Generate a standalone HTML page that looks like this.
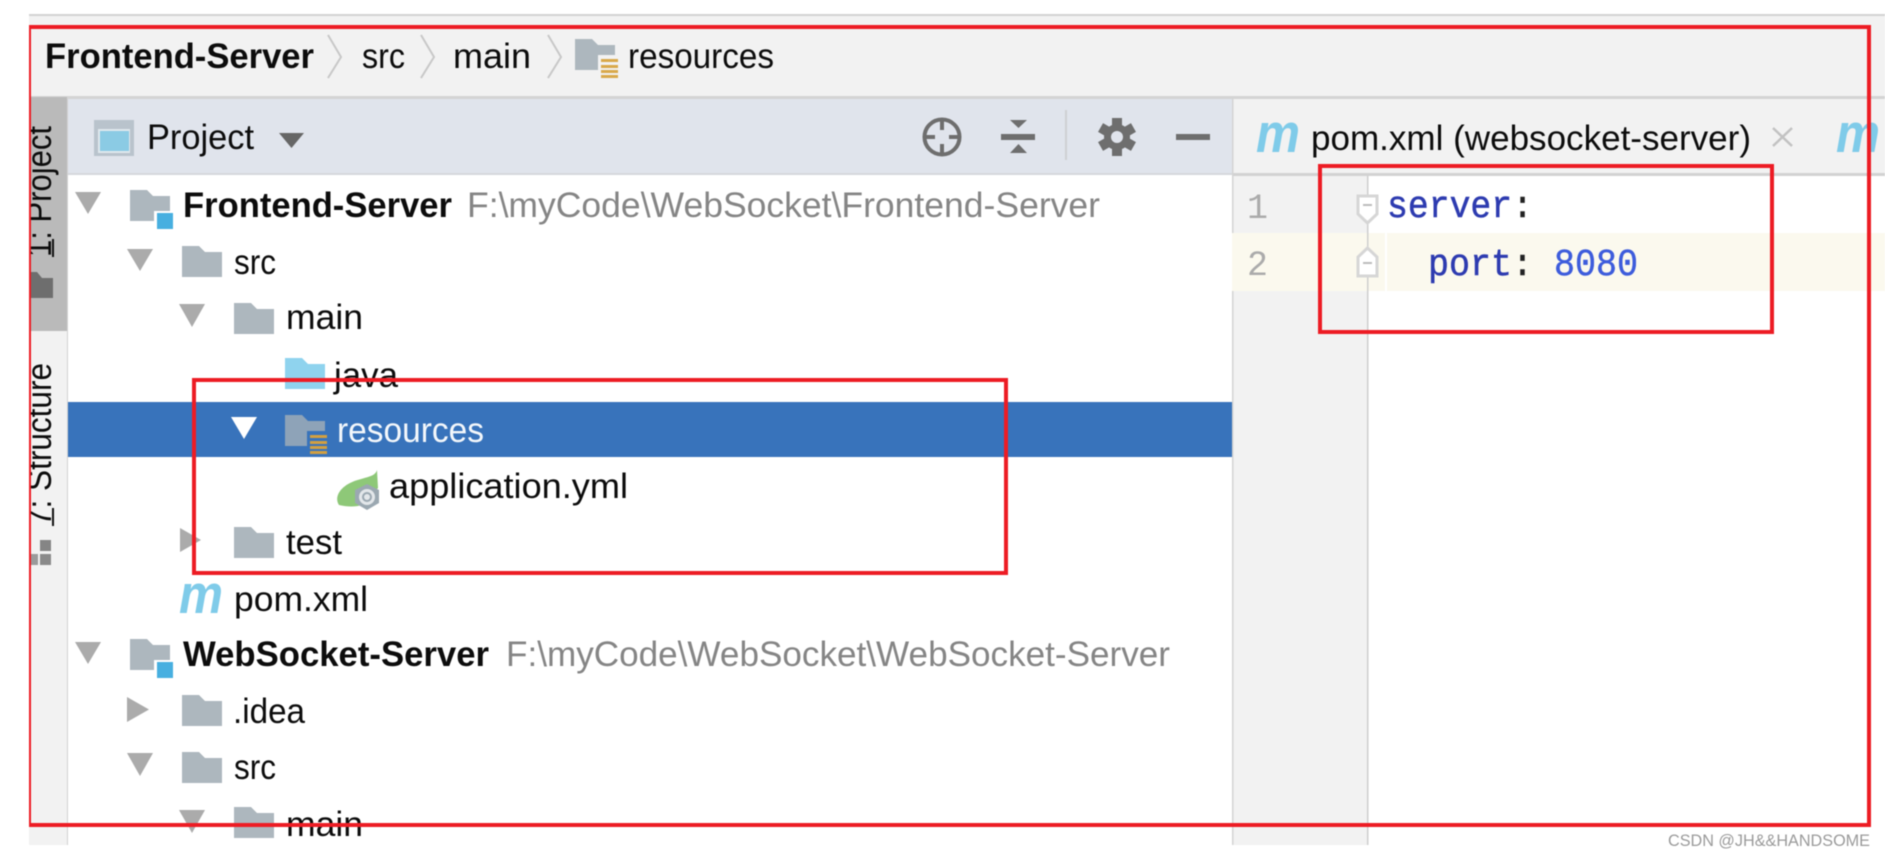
<!DOCTYPE html>
<html lang="en">
<head>
<meta charset="utf-8">
<title>Project view</title>
<style>
html,body{margin:0;padding:0;background:#fff;width:1885px;height:856px;overflow:hidden}
svg{display:block;filter:blur(.65px)}
text{font-family:"Liberation Sans",sans-serif;font-size:35px;fill:#0c0c0c}
.b{font-weight:700}
.g{fill:#858585}
.mono{font-family:"Liberation Mono",monospace;font-size:38px;stroke-width:.5px}
.ln{font-family:"Liberation Mono",monospace;font-size:35px;fill:#ababab}
.m{font-weight:700;font-style:italic;font-size:55px;fill:#7fcbe9}
</style>
</head>
<body>
<svg width="1885" height="856" viewBox="0 0 1885 856" xmlns="http://www.w3.org/2000/svg">
<defs>
<path id="f" d="M0 0H17L23 6H40V31H0Z"/>
</defs>
<rect width="1885" height="856" fill="#fff"/>
<!-- top areas -->
<rect x="29" y="14" width="1856" height="2" fill="#d2d2d2"/>
<rect x="29" y="16" width="1856" height="81" fill="#f2f2f2"/>
<rect x="29" y="96" width="1856" height="3" fill="#d4d4d4"/>
<rect x="68" y="99" width="1164" height="74" fill="#e0e4ec"/>
<rect x="1232" y="99" width="653" height="74" fill="#f2f2f2"/>
<rect x="68" y="173" width="1164" height="2" fill="#d6d8dc"/>
<rect x="1232" y="173" width="653" height="3" fill="#d2d2d2"/>
<!-- left strip -->
<rect x="29" y="97" width="38" height="748" fill="#f2f2f2"/>
<rect x="29" y="97" width="38" height="234" fill="#bababa"/>
<rect x="67" y="99" width="1" height="746" fill="#d2d2d2"/>
<!-- editor -->
<rect x="1232" y="176" width="136" height="669" fill="#f2f2f2"/>
<rect x="1232" y="99" width="1.500" height="746" fill="#d4d4d4"/>
<rect x="1232" y="233" width="653" height="58" fill="#fbf9ee"/>
<rect x="1385" y="233" width="2" height="58" fill="#fff"/>
<rect x="1367" y="176" width="1.500" height="669" fill="#cfcfcf"/>

<!-- breadcrumb -->
<text class="b" x="45" y="68" textLength="269" lengthAdjust="spacingAndGlyphs">Frontend-Server</text>
<polyline points="328,35 341,57 328,78" fill="none" stroke="#c8c8c8" stroke-width="2"/>
<text x="362" y="68" textLength="43" lengthAdjust="spacingAndGlyphs">src</text>
<polyline points="421,35 434,57 421,78" fill="none" stroke="#c8c8c8" stroke-width="2"/>
<text x="453" y="68" textLength="78" lengthAdjust="spacingAndGlyphs">main</text>
<polyline points="548,35 561,57 548,78" fill="none" stroke="#c8c8c8" stroke-width="2"/>
<use href="#f" x="575" y="39" fill="#adb7be"/>
<rect x="598" y="55" width="22" height="25" fill="#f2f2f2"/>
<path d="M601 59h17v3h-17zM601 65h17v3h-17zM601 70h17v3h-17zM601 75h17v3h-17z" fill="#d9a94a"/>
<text x="628" y="68" textLength="146" lengthAdjust="spacingAndGlyphs">resources</text>

<!-- tool strip labels -->
<g transform="translate(51,257) rotate(-90)">
<text x="0" y="0" textLength="131" lengthAdjust="spacingAndGlyphs">1: Project</text>
<rect x="0" y="1" width="18" height="2" fill="#111"/>
</g>
<path d="M30 272H37L42 278H53V298H30Z" fill="#6e6e6e"/>
<g transform="translate(51,526) rotate(-90)">
<text x="0" y="0" textLength="163" lengthAdjust="spacingAndGlyphs">7: Structure</text>
<rect x="0" y="1" width="18" height="2" fill="#111"/>
</g>
<rect x="40" y="540" width="11" height="11" fill="#858585"/>
<rect x="30" y="554" width="8" height="11" fill="#9a9a9a"/>
<rect x="40" y="554" width="11" height="11" fill="#8a8a8a"/>
<!-- crop the sideways labels at the image edge -->
<rect x="0" y="97" width="29" height="748" fill="#fff"/>

<!-- project toolbar -->
<rect x="94" y="120" width="40" height="36" fill="#b9c3cc"/>
<rect x="98" y="129" width="32" height="24" fill="#dfe7ed"/>
<rect x="100" y="131" width="29" height="20" fill="#8bcbe4"/>
<text x="147" y="149" textLength="107" lengthAdjust="spacingAndGlyphs">Project</text>
<path d="M279 133H304L291.500 148Z" fill="#666"/>
<!-- crosshair -->
<g fill="none" stroke="#6e6e6e" stroke-width="4">
<circle cx="942" cy="137" r="17.500"/>
<path d="M942 119V130M942 144V155M924 137H935M949 137H960"/>
</g>
<!-- collapse -->
<path d="M1010 120H1027L1018.500 128Z M1010 153H1027L1018.500 144Z" fill="#6e6e6e"/>
<rect x="1001" y="134" width="34" height="6" fill="#6e6e6e"/>
<rect x="1065" y="110" width="2" height="50" fill="#cfd0d2"/>
<!-- gear -->
<g fill="#6e6e6e">
<rect x="1112" y="118" width="10" height="38"/>
<rect x="1112" y="118" width="10" height="38" transform="rotate(60 1117 137)"/>
<rect x="1112" y="118" width="10" height="38" transform="rotate(120 1117 137)"/>
<circle cx="1117" cy="137" r="13"/>
</g>
<circle cx="1117" cy="137" r="6" fill="#e0e4ec"/>
<rect x="1176" y="134" width="34" height="6" fill="#6e6e6e"/>

<!-- tabs -->
<text class="m" x="1256" y="152" textLength="44" lengthAdjust="spacingAndGlyphs">m</text>
<text x="1311" y="150" textLength="440" lengthAdjust="spacingAndGlyphs">pom.xml (websocket-server)</text>
<path d="M1773 128L1792 146M1792 128L1773 146" stroke="#c2c2c2" stroke-width="2.500" fill="none"/>
<text class="m" x="1836" y="152" textLength="44" lengthAdjust="spacingAndGlyphs">m</text>

<!-- selected row -->
<rect x="68" y="402" width="1164" height="55" fill="#3873bb"/>

<!-- tree -->
<path d="M75 192H101L88 214Z" fill="#ababab"/>
<use href="#f" x="130" y="190" fill="#adb7be"/>
<rect x="154" y="211" width="19" height="19" fill="#fff"/>
<rect x="157" y="213" width="16" height="16" fill="#47afe0"/>
<text class="b" x="183" y="217" textLength="269" lengthAdjust="spacingAndGlyphs">Frontend-Server</text>
<text class="g" x="467" y="217" textLength="633" lengthAdjust="spacingAndGlyphs">F:\myCode\WebSocket\Frontend-Server</text>

<path d="M127 249H153L140 271Z" fill="#ababab"/>
<use href="#f" x="182" y="246" fill="#adb7be"/>
<text x="234" y="274" textLength="42" lengthAdjust="spacingAndGlyphs">src</text>

<path d="M179 304H205L192 327Z" fill="#ababab"/>
<use href="#f" x="234" y="303" fill="#adb7be"/>
<text x="286" y="329" textLength="77" lengthAdjust="spacingAndGlyphs">main</text>

<use href="#f" x="285" y="358" fill="#8fd3ee"/>
<text x="334" y="387" textLength="64" lengthAdjust="spacingAndGlyphs">java</text>

<path d="M231 417H257L244 439Z" fill="#fff"/>
<use href="#f" x="285" y="415" fill="#8ea3b8"/>
<rect x="307" y="431" width="21" height="25" fill="#3873bb"/>
<path d="M310 435h17v3h-17zM310 441h17v3h-17zM310 446h17v3h-17zM310 451h17v3h-17z" fill="#d2a040"/>
<text x="337" y="442" textLength="147" lengthAdjust="spacingAndGlyphs" style="fill:#f3f7fb">resources</text>

<!-- spring yml icon -->
<path d="M377 470C375 478 362 477 350 483C340 488 334 497 339 505C347 507 356 507 362 505L378 488Z" fill="#8ec878"/>
<path d="M367 484L379 490V503L367 510L355 503V490Z" fill="#9ba8b1"/>
<circle cx="367" cy="497" r="8" fill="#e3e7ea"/>
<circle cx="367" cy="497" r="4" fill="none" stroke="#9ba8b1" stroke-width="2"/>
<text x="389" y="498" textLength="239" lengthAdjust="spacingAndGlyphs">application.yml</text>

<path d="M180 528L201 540L180 552Z" fill="#ababab"/>
<use href="#f" x="234" y="527" fill="#adb7be"/>
<text x="286" y="554" textLength="56" lengthAdjust="spacingAndGlyphs">test</text>

<text class="m" x="179" y="613" textLength="44" lengthAdjust="spacingAndGlyphs">m</text>
<text x="234" y="611" textLength="134" lengthAdjust="spacingAndGlyphs">pom.xml</text>

<path d="M75 642H101L88 664Z" fill="#ababab"/>
<use href="#f" x="130" y="639" fill="#adb7be"/>
<rect x="154" y="660" width="19" height="19" fill="#fff"/>
<rect x="157" y="662" width="16" height="16" fill="#47afe0"/>
<text class="b" x="183" y="666" textLength="306" lengthAdjust="spacingAndGlyphs">WebSocket-Server</text>
<text class="g" x="506" y="666" textLength="664" lengthAdjust="spacingAndGlyphs">F:\myCode\WebSocket\WebSocket-Server</text>

<path d="M127 697L149 709.500L127 722Z" fill="#ababab"/>
<use href="#f" x="182" y="695" fill="#adb7be"/>
<text x="233" y="723" textLength="72" lengthAdjust="spacingAndGlyphs">.idea</text>

<path d="M127 753H153L140 776Z" fill="#ababab"/>
<use href="#f" x="182" y="752" fill="#adb7be"/>
<text x="234" y="779" textLength="42" lengthAdjust="spacingAndGlyphs">src</text>

<path d="M179 810H205L192 833Z" fill="#ababab"/>
<use href="#f" x="234" y="807" fill="#adb7be"/>
<text x="286" y="836" textLength="77" lengthAdjust="spacingAndGlyphs">main</text>

<!-- clip bottom -->
<rect x="0" y="845" width="1885" height="11" fill="#fff"/>

<!-- editor text -->
<text class="ln" x="1247" y="218" textLength="21" lengthAdjust="spacingAndGlyphs">1</text>
<text class="ln" x="1247" y="275" textLength="21" lengthAdjust="spacingAndGlyphs">2</text>
<path d="M1358 196H1377V214L1367.500 223L1358 214Z" fill="#fff" stroke="#d6d6d6" stroke-width="3"/>
<rect x="1363" y="204" width="9" height="2" fill="#bdbdbd"/>
<path d="M1358 276H1377V257L1367.500 248L1358 257Z" fill="#fff" stroke="#d6d6d6" stroke-width="3"/>
<rect x="1363" y="262" width="9" height="2" fill="#bdbdbd"/>
<text class="mono" x="1387" y="217" textLength="146" lengthAdjust="spacingAndGlyphs"><tspan style="fill:#2d3bb0;stroke:#2d3bb0">server</tspan><tspan style="fill:#222;stroke:#222">:</tspan></text>
<text class="mono" x="1428" y="275" textLength="105" lengthAdjust="spacingAndGlyphs"><tspan style="fill:#2d3bb0;stroke:#2d3bb0">port</tspan><tspan style="fill:#222;stroke:#222">:</tspan></text>
<text class="mono" x="1554" y="275" textLength="84" lengthAdjust="spacingAndGlyphs" style="fill:#3d5cdc;stroke:#3d5cdc">8080</text>

<!-- watermark -->
<text x="1668" y="846" textLength="202" lengthAdjust="spacingAndGlyphs" style="font-size:16.500px;fill:#9a9a9a">CSDN @JH&amp;&amp;HANDSOME</text>

<!-- red annotation boxes -->
<g fill="#ed1c24">
<rect x="29" y="25" width="1842" height="4"/>
<rect x="29" y="25" width="2" height="802"/>
<rect x="1867" y="25" width="4" height="802"/>
<rect x="29" y="823" width="1842" height="4"/>

<rect x="192" y="378" width="816" height="4"/>
<rect x="192" y="378" width="4" height="197"/>
<rect x="1004" y="378" width="4" height="197"/>
<rect x="192" y="571" width="816" height="4"/>

<rect x="1318" y="164" width="456" height="4"/>
<rect x="1318" y="164" width="4" height="170"/>
<rect x="1770" y="164" width="4" height="170"/>
<rect x="1318" y="330" width="456" height="4"/>
</g>
</svg>
</body>
</html>
